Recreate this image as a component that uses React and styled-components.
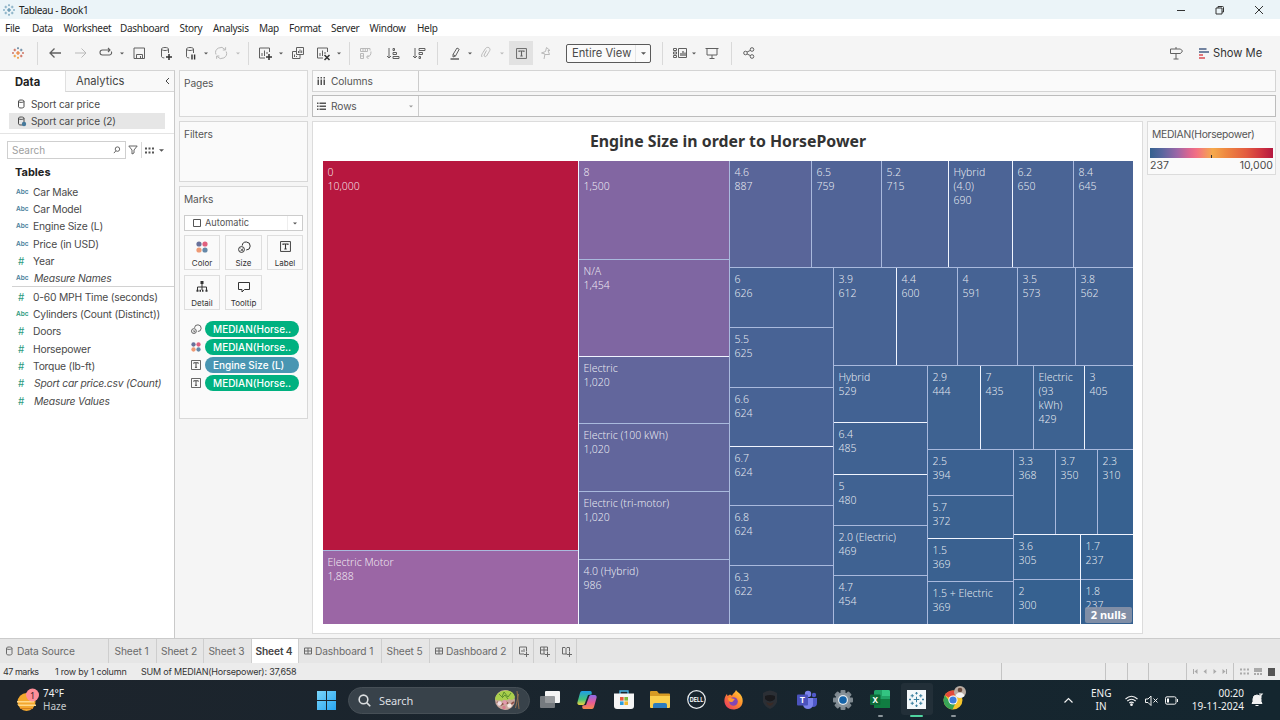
import React from "react";
import styled, { createGlobalStyle } from "styled-components";

const Global = createGlobalStyle`
  * { box-sizing: border-box; }
  html, body { margin: 0; padding: 0; }
  body { width: 1280px; height: 720px; overflow: hidden; background: #f5f5f5; }
  svg { display: block; flex: none; overflow: visible; }
`;

const ui = `"Noto Sans", "Open Sans", sans-serif`;
const book = `Inter, "Noto Sans", sans-serif`;

const Window = styled.div`
  width: 1280px;
  height: 720px;
  display: flex;
  flex-direction: column;
  overflow: hidden;
  font: 11px/14px ${book};
  color: #4a4a4a;
  white-space: nowrap;
`;

/* ---------- title, menu ---------- */
const TitleBar = styled.header`
  height: 19px;
  flex: none;
  display: flex;
  align-items: center;
  padding-left: 3px;
  gap: 4px;
  background: #ebf4f8;
  font: 10px/18px ${ui};
  letter-spacing: -0.35px;
  color: #222;
`;
const WindowButtons = styled.div`
  margin-left: auto;
  display: flex;
  gap: 29px;
  padding-right: 16px;
`;
const MenuBar = styled.nav`
  height: 17px;
  flex: none;
  display: flex;
  background: #fff;
  padding-left: 5px;
  font: 10px/19px ${ui};
  letter-spacing: -0.3px;
  color: #2a2a2a;
`;
const MenuItem = styled.span`
  width: ${(p) => p.$w}px;
  flex: none;
`;

/* ---------- toolbar ---------- */
const Toolbar = styled.div`
  height: 34px;
  flex: none;
  display: flex;
  align-items: center;
  background: #f5f5f5;
`;
const Tool = styled.span`
  margin-left: ${(p) => p.$gap}px;
  width: ${(p) => p.$w || 16}px;
  height: 24px;
  flex: none;
  display: flex;
  align-items: center;
  justify-content: center;
  color: ${(p) => (p.$off ? "#b9b9b9" : "#606060")};
  background: ${(p) => (p.$on ? "#e2e2e2" : "transparent")};
`;
const Rule = styled.i`
  margin-left: ${(p) => p.$gap}px;
  width: 1px;
  height: ${(p) => p.$h || 23}px;
  flex: none;
  background: #d9d9d9;
`;
const FitSelect = styled.div`
  margin-left: 13px;
  width: 85px;
  height: 19px;
  flex: none;
  display: flex;
  align-items: center;
  border: 1px solid #5a5a5a;
  border-radius: 2px;
  background: #fafafa;
  font-size: 11.2px;
  color: #4a4a4a;
  padding-left: 5px;
`;
const FitArrow = styled.span`
  margin-left: auto;
  width: 15px;
  height: 17px;
  display: flex;
  align-items: center;
  justify-content: center;
  border-left: 1px solid #e6e6e6;
`;
const ShowMe = styled.div`
  display: flex;
  align-items: center;
  gap: 4px;
  margin-left: 15px;
  width: 81px;
  font-size: 11.2px;
  color: #333;
`;

/* ---------- workspace ---------- */
const Workspace = styled.main`
  height: 568px;
  flex: none;
  display: flex;
  background: #f5f5f5;
`;
const DataPane = styled.aside`
  width: 175px;
  flex: none;
  background: #fff;
  border-right: 1px solid #c9c9c9;
  border-top: 1px solid #d4d4d4;
`;
const PaneTabs = styled.div`
  display: flex;
  height: 21px;
`;
const PaneTab = styled.div`
  width: ${(p) => p.$w}px;
  padding-left: ${(p) => p.$pad}px;
  padding-right: 4px;
  display: flex;
  align-items: center;
  justify-content: space-between;
  font-size: 11.2px;
  font-weight: ${(p) => (p.$active ? 700 : 400)};
  color: ${(p) => (p.$active ? "#222" : "#444")};
  background: ${(p) => (p.$active ? "#fff" : "#f9f9f9")};
  border-left: ${(p) => (p.$active ? 0 : "1px solid #e0e0e0")};
  border-bottom: ${(p) => (p.$active ? 0 : "1px solid #d6d6d6")};
`;
const Sources = styled.div`
  padding: 4px 9px 4px;
  height: 42px;
  border-bottom: 1px solid #e4e4e4;
`;
const Source = styled.div`
  height: 16.5px;
  display: flex;
  align-items: center;
  padding-left: 8px;
  gap: 5px;
  letter-spacing: -0.15px;
  font-size: 10.1px;
  background: ${(p) => (p.$active ? "#e6e6e6" : "transparent")};
`;
const SearchRow = styled.div`
  display: flex;
  align-items: center;
  height: 18px;
  margin: 7px 0 0 7px;
`;
const SearchBox = styled.div`
  width: 119px;
  height: 18px;
  border: 1px solid #cfcfcf;
  display: flex;
  align-items: center;
  justify-content: space-between;
  padding: 0 4px;
  color: #a0a0a0;
  font-size: 10px;
`;
const SearchIcon = styled.span`
  color: #555;
`;
const FilterTools = styled.div`
  display: flex;
  align-items: center;
  gap: 3px;
  padding-left: 2px;
  color: #666;
`;
const TablesTitle = styled.h2`
  margin: 6px 0 3px 15px;
  font: 700 11px/15px ${book};
  color: #222;
`;
const Fields = styled.div`
  border-top: ${(p) => (p.$rule ? "1px solid #d2d2d2" : 0)};
  margin-left: 12px;
  margin-top: ${(p) => (p.$rule ? -1 : 0)}px;
  padding-top: 1px;
  padding-top: ${(p) => (p.$rule ? 1 : 0)}px;
`;
const Field = styled.div`
  height: 17.33px;
  display: flex;
  align-items: center;
  font-size: 10.3px;
  letter-spacing: -0.2px;
  font-style: ${(p) => (p.$italic ? "italic" : "normal")};
`;
const FieldType = styled.span`
  width: 21px;
  padding-left: ${(p) => (p.$num ? 6 : 4)}px;
  margin-right: ${(p) => (p.$italic ? 1 : 0)}px;
  font-style: normal;
  font-weight: ${(p) => (p.$num ? 400 : 600)};
  font-size: ${(p) => (p.$num ? 10 : 6.5)}px;
  letter-spacing: 0;
  color: ${(p) => (p.$green ? "#2f9b80" : "#4a7f9c")};
`;

const Cards = styled.section`
  width: 129px;
  margin-left: 4px;
  flex: none;
  display: flex;
  flex-direction: column;
  gap: 4px;
`;
const Card = styled.div`
  height: ${(p) => p.$h}px;
  flex: none;
  border: 1px solid #d8d8d8;
  background: #fafafa;
  padding: 5px 4px;
`;
const CardTitle = styled.div`
  font-size: 10.2px;
  line-height: 14px;
  letter-spacing: -0.1px;
  color: #555;
`;
const MarkSelect = styled.div`
  margin-top: 9px;
  height: 16px;
  width: 119px;
  border: 1px solid #ccc;
  background: #fff;
  display: flex;
  align-items: center;
  padding-left: 8px;
  gap: 4px;
  font-size: 9.2px;
  color: #555;
`;
const SelectCaret = styled.span`
  margin-left: auto;
  width: 15px;
  height: 14px;
  display: flex;
  align-items: center;
  justify-content: center;
  border-left: 1px solid #eee;
`;
const MarkGrid = styled.div`
  margin-top: 4px;
  display: grid;
  grid-template-columns: 36px 37px 36px;
  grid-auto-rows: 35px;
  gap: 5px;
`;
const MarkButton = styled.div`
  border: 1px solid #dedede;
  display: flex;
  flex-direction: column;
  align-items: center;
  justify-content: space-between;
  padding: 5px 0 1px;
  font-size: 8px;
  line-height: 10px;
  color: #333;
`;
const Pills = styled.div`
  margin-top: 11px;
  padding-left: 7px;
  display: grid;
  gap: 2px;
`;
const PillRow = styled.div`
  display: flex;
  align-items: center;
  gap: 4px;
  height: 16px;
`;
const Pill = styled.span`
  width: 94px;
  height: 16px;
  border-radius: 8px;
  padding-left: 8px;
  background: ${(p) => (p.$blue ? "#4996b2" : "#00b180")};
  color: #fff;
  font-size: 10px;
  line-height: 16px;
  font-weight: 500;
`;

const Stage = styled.section`
  margin-left: 4px;
  flex: 1;
  display: flex;
  flex-direction: column;
`;
const Shelf = styled.div`
  height: 22px;
  width: 964px;
  margin-bottom: ${(p) => p.$mb}px;
  flex: none;
  display: flex;
  border: 1px solid ${(p) => (p.$dark ? "#bcbcbc" : "#d4d4d4")};
  background: #fafafa;
`;
const ShelfLabel = styled.div`
  width: 106px;
  border-right: 1px solid #ccc;
  display: flex;
  align-items: center;
  gap: 5px;
  padding: 0 5px 0 4px;
  font-size: 10.2px;
  letter-spacing: -0.1px;
  color: #555;
`;
const Push = styled.span`
  margin-left: auto;
`;
const VizRow = styled.div`
  display: flex;
  gap: 4px;
  align-items: flex-start;
`;
const Viz = styled.article`
  width: 831px;
  height: 513px;
  background: #fff;
  border: 1px solid #dcdcdc;
  padding: 0 9px 0 10px;
`;
const VizTitle = styled.h1`
  margin: 0;
  height: 39px;
  text-align: center;
  font: 700 15.85px/39px ${ui};
  color: #333;
`;
const MapFrame = styled.div`
  position: relative;
  display: flex;
  width: 810px;
  height: 463px;
  font: 300 10.5px/14px ${ui};
`;
const Nulls = styled.div`
  position: absolute;
  right: 1px;
  bottom: 1px;
  width: 47px;
  height: 16px;
  border-radius: 2px;
  background: rgba(135, 147, 168, 0.92);
  color: #fff;
  text-align: center;
  font: 700 11px/16px ${ui};
`;
const edge = (p) => (p.$edge ? `1px solid ${p.$edge === "w" ? "#f1f5ff" : "#a9b9dd"}` : 0);
const Split = styled.div`
  display: flex;
  flex-direction: ${(p) => (p.$col ? "column" : "row")};
  flex: ${(p) => (p.$size ? `0 0 ${p.$size}px` : "1 1 0")};
  min-width: 0;
  min-height: 0;
  border-right: ${(p) => (p.$inRow ? edge(p) : 0)};
  border-bottom: ${(p) => (p.$inRow ? 0 : edge(p))};
`;
const Cell = styled(Split)`
  display: block;
  padding: 4px 0 0 4.5px;
  background: ${(p) => p.$bg};
  color: rgba(255, 255, 255, 0.86);
  white-space: pre;
  overflow: hidden;
`;
const Legend = styled.div`
  width: 129px;
  height: 54px;
  background: #fafafa;
  border: 1px solid #dcdcdc;
  padding: 5px 2px 0 2px;
  font-size: 10.5px;
`;
const LegendTitle = styled.div`
  padding-left: 2px;
  color: #555;
  font-size: 10.3px;
  letter-spacing: -0.28px;
`;
const Ramp = styled.div`
  margin-top: 7px;
  width: 123px;
  height: 10px;
  display: flex;
  align-items: flex-end;
  justify-content: center;
  background: linear-gradient(90deg, #35618f 0%, #5a669f 10%, #9b66a7 22%, #dc6690 32%, #f37083 38%, #f49460 46%, #f5a94b 51%, #ee8741 62%, #e35c40 78%, #cf3440 90%, #b4173f 100%);
`;
const Tick = styled.i`
  width: 1px;
  height: 3px;
  background: #333;
`;
const LegendEnds = styled.div`
  display: flex;
  justify-content: space-between;
  width: 123px;
  padding-top: 1px;
`;

/* ---------- sheet tabs and status ---------- */
const SheetTabs = styled.div`
  height: 25px;
  flex: none;
  display: flex;
  background: #e6e6e6;
  border-top: 1px solid #cbcbcb;
`;
const SheetTab = styled.div`
  width: ${(p) => p.$w}px;
  flex: none;
  display: flex;
  align-items: center;
  justify-content: ${(p) => (p.$pad ? "flex-start" : "center")};
  padding-left: ${(p) => p.$pad || 0}px;
  padding-right: ${(p) => (p.$pad ? 0 : p.$w > 30 ? 2 : 0)}px;
  gap: 3px;
  border-right: 1px solid #cecece;
  background: ${(p) => (p.$active ? "#fff" : "transparent")};
  color: ${(p) => (p.$active ? "#444" : "#6a6a6a")};
  font-weight: ${(p) => (p.$active ? 600 : 400)};
  font-size: 10.2px;
  letter-spacing: -0.12px;
`;
const StatusBar = styled.div`
  height: 17px;
  flex: none;
  display: flex;
  background: #ececec;
  color: #333;
  font: 9px/17px ${book};
  letter-spacing: -0.2px;
  padding-left: 3px;
`;
const StatusText = styled.span`
  width: ${(p) => p.$w}px;
  letter-spacing: ${(p) => p.$ls || -0.2}px;
`;
const StatusBox = styled.span`
  width: ${(p) => p.$w}px;
  border-left: 1px solid #c4c4c4;
  display: flex;
  align-items: center;
  justify-content: space-evenly;
`;
const StatusRight = styled.div`
  margin-left: auto;
  display: flex;
`;

/* ---------- taskbar ---------- */
const Taskbar = styled.footer`
  height: 40px;
  flex: none;
  display: flex;
  align-items: center;
  background: linear-gradient(90deg, #1d242c, #19252e 50%, #14262f);
  color: #f2f2f2;
  font: 10px/13px ${ui};
`;
const Weather = styled.div`
  width: 300px;
  padding-left: 16px;
  display: flex;
  align-items: center;
  gap: 4px;
`;
const Stack = styled.div`
  text-align: ${(p) => p.$align || "left"};
  width: ${(p) => p.$w || "auto"};
  line-height: 13.5px;
`;
const Haze = styled.span`
  color: #c6cacd;
`;
const TaskSearch = styled.div`
  margin-left: 12px;
  width: 182px;
  height: 27px;
  border-radius: 14px;
  background: #38424a;
  border: 1px solid #464f56;
  display: flex;
  align-items: center;
  padding: 0 8px 0 9px;
  gap: 8px;
  font-size: 11px;
  letter-spacing: -0.1px;
  color: #dcdfe1;
`;
const Apps = styled.div`
  display: flex;
  margin-left: 2px;
`;
const AppSlot = styled.div`
  width: 36.65px;
  height: 40px;
  display: flex;
  flex-direction: column;
  align-items: center;
  justify-content: space-between;
  padding: 10px 0 3px;
`;
const Running = styled.i`
  width: ${(p) => (p.$on ? 13 : 5)}px;
  height: 2px;
  border-radius: 1px;
  background: ${(p) => (p.$on ? "#4fd5a0" : p.$open ? "#8b949a" : "transparent")};
`;
const AppTile = styled.div`
  width: 32px;
  height: 34px;
  margin-top: -7px;
  padding-top: 7px;
  display: flex;
  justify-content: center;
  border-radius: 3px;
  background: ${(p) => (p.$on ? "#222f38" : "transparent")};
`;
const Tray = styled.div`
  margin-left: auto;
  display: flex;
  align-items: center;
  padding-right: 17px;
`;
const TrayItem = styled.span`
  margin-left: ${(p) => p.$l || 0}px;
  margin-right: ${(p) => p.$r || 0}px;
  display: flex;
`;

/* ---------- icons ---------- */
const Svg = ({ s = 16, w, h, vb, children, sw = 1 }) => (
  <svg width={w || s} height={h || s} viewBox={vb || `0 0 ${w || s} ${h || s}`} fill="none" stroke="currentColor" strokeWidth={sw}>
    {children}
  </svg>
);
const Caret = ({ s = 5, c = "#555" }) => (
  <svg width={s} height={3} viewBox="0 0 6 3"><path d="M0 0h6L3 3z" fill={c} /></svg>
);
const plus = (x, y, r) => `M${x - r} ${y}h${2 * r}M${x} ${y - r}v${2 * r}`;
const TableauMark = ({ s = 12, colors = ["#e8762c", "#c8604c", "#5b7f9a", "#eb9129"] }) => (
  <Svg s={s} vb="0 0 12 12" sw={0.9}>
    <path d={plus(6, 6, 2)} stroke={colors[0]} strokeWidth="1.1" />
    <path d={plus(2.8, 3, 1.3) + plus(9.2, 9, 1.3)} stroke={colors[1]} />
    <path d={plus(9.2, 3, 1.3) + plus(6, 1.2, 1)} stroke={colors[2]} />
    <path d={plus(2.8, 9, 1.3) + plus(6, 10.8, 1)} stroke={colors[3]} />
    <path d={plus(1, 6, 0.9) + plus(11, 6, 0.9)} stroke={colors[1]} />
  </Svg>
);
const Back = () => <Svg><path d="M14 8H3M7.5 3.500L3 8l4.500 4.500" strokeWidth="1.300" /></Svg>;
const Forward = () => <Svg><path d="M2 8h11M8.500 3.500L13 8l-4.500 4.500" /></Svg>;
const Replay = () => <Svg><path d="M12 5H4.500a2.500 2.500 0 0 0 0 5H11.500a2.300 2.300 0 0 0 1.800-3.500M10 3l2 2-2 2" strokeWidth="1.100" /></Svg>;
const Save = () => <Svg><path d="M3 3h10.500v10.500H3zM5.500 13.500v-4h6v4M9.500 11v2.500" /></Svg>;
const Cyl = ({ children }) => (
  <Svg>
    <path d="M11.500 8V4c0-.9-1.500-1.500-3.500-1.500S4.500 3.100 4.500 4v7.500c0 .8 1.200 1.300 2.800 1.400M4.500 4c0 .9 1.500 1.500 3.500 1.500S11.500 4.900 11.500 4" />
    {children}
  </Svg>
);
const AddData = () => <Cyl><path d="M12 9v6M9 12h6" strokeWidth="1.500" stroke="#333" /></Cyl>;
const PauseData = () => <Cyl><path d="M10 9.500v5M12.600 9.500v5" strokeWidth="1.400" stroke="#333" /></Cyl>;
const Refresh = () => <Svg><path d="M3 9.500a5.200 5.200 0 0 1 9-5M13.200 6.500a5.200 5.200 0 0 1-9 5M9.800 5h2.800V2.200M6.400 11H3.600v2.800" /></Svg>;
const ChartBox = ({ children }) => <Svg><path d="M12.500 7V3h-10v10H8M5 11V8M7.500 11V5.500M10 9V7" />{children}</Svg>;
const NewSheet = () => <ChartBox><path d="M12 9v6M9 12h6" strokeWidth="1.500" stroke="#333" /></ChartBox>;
const ClearSheet = () => <ChartBox><path d="M9.500 10l5 5M14.500 10l-5 5" strokeWidth="1.500" stroke="#333" /></ChartBox>;
const Duplicate = () => <Svg><path d="M6.500 2.500h7v7h-7zM6.500 6.500h-4v7h7.500v-4M8.500 8V6M10 8V4.500M11.700 8V5.500M4.500 12V9.500M6.500 12v-1" /></Svg>;
const Swap = () => <Svg><path d="M2.500 3.500h9.500v2M2.500 3.500v3h7v-3M5 3.500v3M7.300 3.500v3M2.500 8.500v5h3v-5zM2.500 11h3M13 6.500c0 3.500-1 5-4 5.500M10.500 10l-2 2 2 2" /></Svg>;
const SortAsc = () => <Svg><path d="M4 3v10M2 11l2 2 2-2M8 3.500h1.500v2H8zM8 7.500h3.500v2H8zM8 11.500h6v2H8z" /></Svg>;
const SortDesc = () => <Svg><path d="M4 3v10M2 11l2 2 2-2M8 3.500h6v2H8zM8 7.500h3.500v2H8zM8 11.500h1.500v2H8z" /></Svg>;
const Pen = () => <Svg><path d="M6 9.500L10 3l2.200 1.300L8.500 11 6 12zM6 9.500L8.500 11" /><path d="M3.500 14h8.500" strokeWidth="1.500" /></Svg>;
const Clip = () => <Svg><path d="M4 12c-1-1.500 0-3 1-4.500l2.500-4C8.500 2 11 2 11.800 3.500c.6 1.300-.3 2.500-1 3.700L8.500 11c-.8 1.200-2.800.6-2.400-1L8.500 5.500" /></Svg>;
const TBox = ({ s = 12 }) => (
  <Svg s={s} vb="0 0 12 12"><path d="M.6.6h10.800v10.800H.6z" /><path d="M3.300 4.400V3.300h5.400v1.100M6 3.300v5.400M4.700 8.800h2.600" strokeWidth="1.200" /></Svg>
);
const Pin = () => <Svg><path d="M9.500 2.500L8.500 6.500 4.500 8l3.500 1L7 14M9.500 2.500l3.500 3h-2l1.500 4H8" /></Svg>;
const ShowCards = () => <Svg><path d="M1.500 3.500h3v2h-3zM1.500 7h3v2h-3zM1.500 10.500h3v2h-3zM6.500 3.500h8v9h-8z" /><path d="M9 11V8M11 11V6M13 11V7.500" strokeWidth="1.300" /></Svg>;
const Present = () => <Svg><path d="M3 3.500h10v6.500H3zM1.500 3.500h13M8 10v4M5.500 13.500h5" /></Svg>;
const Share = () => <Svg><circle cx="4.500" cy="8" r="1.800" /><circle cx="11" cy="4.500" r="1.800" /><circle cx="11" cy="11.500" r="1.800" /><path d="M6.100 7l3.300-1.600M6.100 9l3.300 1.600" /></Svg>;
const Sign = () => <Svg><path d="M2.500 4h10l2 2-2 2.500h-10zM8 2v2M8 8.500V14M5.500 14h5" /></Svg>;
const ShowMeIcon = () => (
  <svg width="10" height="11" viewBox="0 0 10 11">
    <path d="M0 0h7.500v2H0zM0 3h10v2H0z" fill="#7283a0" /><path d="M0 6h4v2H0zM0 9h6v2H0z" fill="#e2777b" />
  </svg>
);
const Db = ({ linked }) => (
  <Svg w={9} h={10}><path d="M1.500 2.200v5.600c0 .7 1 1.200 2.700 1.200S7 8.500 7 7.800V2.200C7 1.500 6 1 4.200 1S1.500 1.500 1.500 2.200zm0 0c0 .7 1 1.200 2.700 1.200S7 2.900 7 2.200" />{linked && <circle cx="7" cy="8" r="2.200" fill="#45799b" stroke="none" />}</Svg>
);
const Lens = ({ flip, s = 9, sw = 1 }) => (
  <Svg s={s} vb="0 0 9 9" sw={sw}>{flip ? <><circle cx="5" cy="3.500" r="2.500" /><path d="M3.200 5.500L1 8" /></> : <><circle cx="3.800" cy="3.800" r="3" /><path d="M6 6l2.500 2.500" /></>}</Svg>
);
const Funnel = () => <Svg w={10} h={10}><path d="M.8 1h8.400L6 5v3L4 9V5z" /></Svg>;
const Dots6 = ({ c = "#555" }) => (
  <svg width="9" height="7" viewBox="0 0 9 7"><path d="M0 .5h2v2H0zM3.500.5h2v2h-2zM7 .5h2v2H7zM0 4.500h2v2H0zM3.500 4.500h2v2h-2zM7 4.500h2v2H7z" fill={c} /></svg>
);
const ColorDots = ({ s = 12 }) => (
  <svg width={s} height={s} viewBox="0 0 12 12">
    <circle cx="3" cy="3" r="2.600" fill="#68719a" /><circle cx="9" cy="3" r="2.600" fill="#e0607e" /><circle cx="3" cy="9" r="2.600" fill="#ee9a75" /><circle cx="9" cy="9" r="2.600" fill="#6588a8" />
  </svg>
);
const SizeIcon = ({ s = 12 }) => (
  <Svg s={s} vb="0 0 12 12"><path d="M4.200 4.600a4 4 0 1 1 4 4.400" /><circle cx="3.500" cy="8.500" r="2.900" /><path d="M2.600 7.600L4.500 9.400M4.500 7.600v1.800H2.600" strokeWidth=".7" /></Svg>
);
const DetailIcon = () => (
  <Svg s={12}><path d="M6 2v4M1.500 9V6h9v3M6 6v3" /><path d="M4.500 0h3v3h-3zM.5 8.800h2v2h-2zM3.500 8.800h1.500v2H3.500zM6 8.800h1.500v2H6zM9.500 8.800h2v2h-2z" fill="currentColor" stroke="none" /></Svg>
);
const TipIcon = () => <Svg s={12}><path d="M.5 1.500h11v7H6.500L4 11V8.500H.5z" /></Svg>;
const ColIcon = () => <svg width="9" height="8"><path d="M.5 0h1.500v1.500H.5zM3.500 0H5v1.500H3.500zM6.500 0H8v1.500H6.500zM.5 2.500h1.500V8H.5zM3.500 2.500H5V8H3.500zM6.500 2.500H8V8H6.500z" fill="#555" /></svg>;
const RowIcon = () => <svg width="9" height="8"><path d="M0 .5h1.500V2H0zM0 3.500h1.500V5H0zM0 6.500h1.500V8H0zM2.500.5H9V2H2.500zM2.500 3.500H9V5H2.500zM2.500 6.500H9V8H2.500z" fill="#555" /></svg>;
const GridIcon = () => <Svg w={8} h={8}><path d="M.5 1h7v6h-7zM4 1v6M.5 4h7" /></Svg>;
const NewTabIcon = ({ kind }) => (
  <Svg w={11} h={11}>
    <path d={kind === "story" ? "M8.500 5.500V1.500H6L5 2.500 4 1.500H1.500V8H6M5 2.500V8" : "M8.500 5.500v-4.500h-7v7H6"} />
    {kind === "sheet" && <path d="M4 6V4M6 6V2.800" />}
    {kind === "dash" && <path d="M1.500 4h7M5 1v7" />}
    <path d="M8.500 6v5M6 8.500h5" />
  </Svg>
);

/* ---------- data ---------- */
const menus = [["File", 27], ["Data", 31.5], ["Worksheet", 56.500], ["Dashboard", 59.500], ["Story", 33.500], ["Analysis", 46], ["Map", 30], ["Format", 42], ["Server", 38.500], ["Window", 47.500], ["Help", 30]];
const dims = [["Abc", "Car Make"], ["Abc", "Car Model"], ["Abc", "Engine Size (L)"], ["Abc", "Price (in USD)"], ["#", "Year"], ["Abc", "Measure Names", true]];
const measures = [["#", "0-60 MPH Time (seconds)"], ["Abc", "Cylinders (Count (Distinct))"], ["#", "Doors"], ["#", "Horsepower"], ["#", "Torque (lb-ft)"], ["#", "Sport car price.csv (Count)", true], ["#", "Measure Values", true]];

const cell = (text, bg, size, e) => ({ text, bg, size, edge: e });
const split = (dir, size, e, kids) => ({ dir, size, edge: e, kids });
const tree = split("row", 810, null, [
  split("col", 256, "w", [cell("0\n10,000", "#b7173f", 390, "l"), cell("Electric Motor\n1,888", "#9b66a5")]),
  split("col", 151, "l", [
    cell("8\n1,500", "#8266a2", 99, "l"), cell("N/A\n1,454", "#7f66a2", 97, "w"), cell("Electric\n1,020", "#62669c", 67, "l"),
    cell("Electric (100 kWh)\n1,020", "#62669c", 68, "l"), cell("Electric (tri-motor)\n1,020", "#62669c", 68, "l"), cell("4.0 (Hybrid)\n986", "#60659b"),
  ]),
  split("col", 0, null, [
    split("row", 107, "l", [
      cell("4.6\n887", "#596599", 82, "l"), cell("6.5\n759", "#516497", 70, "l"), cell("5.2\n715", "#4e6496", 67, "w"),
      cell("Hybrid\n(4.0)\n690", "#4c6496", 64, "w"), cell("6.2\n650", "#4a6495", 61, "l"), cell("8.4\n645", "#4a6495"),
    ]),
    split("row", 0, null, [
      split("col", 104, "l", [
        cell("6\n626", "#486395", 60, "l"), cell("5.5\n625", "#486395", 60, "l"), cell("6.6\n624", "#486395", 59, "w"),
        cell("6.7\n624", "#486395", 59, "l"), cell("6.8\n624", "#486395", 60, "l"), cell("6.3\n622", "#486395"),
      ]),
      split("col", 0, null, [
        split("row", 98, "l", [
          cell("3.9\n612", "#476394", 63, "w"), cell("4.4\n600", "#476394", 61, "l"), cell("4\n591", "#466394", 60, "l"),
          cell("3.5\n573", "#456393", 58, "l"), cell("3.8\n562", "#446393"),
        ]),
        split("row", 0, null, [
          split("col", 94, "l", [
            cell("Hybrid\n529", "#426293", 57, "w"), cell("6.4\n485", "#406292", 52, "w"), cell("5\n480", "#406292", 51, "l"),
            cell("2.0 (Electric)\n469", "#3f6292", 50, "l"), cell("4.7\n454", "#3f6292"),
          ]),
          split("col", 0, null, [
            split("row", 84, "l", [
              cell("2.9\n444", "#3e6291", 53, "w"), cell("7\n435", "#3e6291", 53, "l"), cell("Electric\n(93\nkWh)\n429", "#3d6291", 51, "w"), cell("3\n405", "#3c6191"),
            ]),
            split("row", 0, null, [
              split("col", 86, "l", [
                cell("2.5\n394", "#3b6191", 46, "l"), cell("5.7\n372", "#3a6190", 43, "w"), cell("1.5\n369", "#3a6190", 43, "l"), cell("1.5 + Electric\n369", "#3a6190"),
              ]),
              split("col", 0, null, [
                split("row", 85, "w", [cell("3.3\n368", "#3a6190", 42, "l"), cell("3.7\n350", "#396190", 42, "l"), cell("2.3\n310", "#376190")]),
                split("row", 0, null, [
                  split("col", 67, "w", [cell("3.6\n305", "#376190", 45, "l"), cell("2\n300", "#366190")]),
                  split("col", 0, null, [cell("1.7\n237", "#346090", 45, "l"), cell("1.8\n237", "#346090")]),
                ]),
              ]),
            ]),
          ]),
        ]),
      ]),
    ]),
  ]),
]);
const Node = ({ n, inRow }) =>
  n.kids ? (
    <Split $col={n.dir === "col"} $size={n.size} $edge={n.edge} $inRow={inRow}>
      {n.kids.map((k, i) => <Node key={i} n={k} inRow={n.dir === "row"} />)}
    </Split>
  ) : (
    <Cell $size={n.size} $edge={n.edge} $inRow={inRow} $bg={n.bg}>{n.text}</Cell>
  );

/* ---------- taskbar art ---------- */
const WinLogo = () => <svg width="19" height="19" viewBox="0 0 19 19"><defs><linearGradient id="win" x2="1" y2="1"><stop stopColor="#7ad6fb" /><stop offset="1" stopColor="#27a4f0" /></linearGradient></defs><path d="M0 0h9v9H0zM10 0h9v9h-9zM0 10h9v9H0zM10 10h9v9h-9z" fill="url(#win)" /></svg>;
const WeatherIcon = () => (
  <svg width="23" height="24" viewBox="0 0 23 24">
    <circle cx="10.500" cy="14" r="9" fill="#f3a72e" /><path d="M1 13h17v1.500H1zM1 16.500h19V18H3z" fill="#ffd98a" /><path d="M4 20h13v1H5z" fill="#d68120" />
    <circle cx="16.500" cy="7" r="6.500" fill="#ff8e98" /><text x="16.500" y="10.500" fontSize="9" textAnchor="middle" fill="#40242a" fontFamily="Noto Sans">1</text>
  </svg>
);
const Terrarium = () => (
  <svg width="27" height="22" viewBox="0 0 27 22">
    <circle cx="11" cy="11" r="10" fill="#c9a79c" />
    <path d="M1 10C2 0 19-2 21 8c-2 4-4 3-6 2-3 3-5-1-7 2-3-2-5 1-7-2z" fill="#a9cf4c" /><path d="M5 5l3 3 2-5 4 5 3-4M8 9l3-3 3 4" stroke="#5d8f2f" fill="none" />
    <path d="M3 13l4 3 5-3 4 3 4-3" stroke="#8d5148" strokeWidth="1.600" fill="none" /><circle cx="5.500" cy="14.500" r="2.200" fill="#f2dfe6" /><circle cx="11" cy="13.500" r="2" fill="#e49aad" /><circle cx="15.500" cy="16.500" r="2.200" fill="#f5e9e4" /><circle cx="10" cy="18.500" r="1.700" fill="#dc7c90" />
    <path d="M23 2l2 18M24.500 5l-3 14" stroke="#92704f" fill="none" />
  </svg>
);
const TaskView = () => <svg width="20" height="19" viewBox="0 0 20 19"><rect x="5" y="1" width="15" height="12" rx="1" fill="#f4f4f4" /><rect x="0" y="6" width="15" height="12" rx="1" fill="#868a8d" fillOpacity=".85" /></svg>;
const Copilot = () => (
  <svg width="20" height="20" viewBox="0 0 20 20"><defs><linearGradient id="cpA" x2="0" y2="1"><stop stopColor="#1f9de8" /><stop offset=".6" stopColor="#41c27c" /><stop offset="1" stopColor="#f3d23c" /></linearGradient><linearGradient id="cpB" x2="0" y2="1"><stop stopColor="#8a6bea" /><stop offset=".55" stopColor="#e95b92" /><stop offset="1" stopColor="#f58a4a" /></linearGradient></defs>
    <path d="M5 1h8c2 0 2 2 1.500 3.500L11 5 8 13c-.5 1.500-1 2-3 2H2.500C.5 15 0 13.500.5 12L3 3c.4-1.300 1-2 2-2z" fill="url(#cpA)" /><path d="M15 19H7c-2 0-2-2-1.500-3.500L9 15l3-8c.5-1.500 1-2 3-2h2.500c2 0 2.500 1.500 2 3L17 17c-.4 1.300-1 2-2 2z" fill="url(#cpB)" /></svg>
);
const Store = () => <svg width="20" height="19" viewBox="0 0 20 19"><path d="M6 4V1h8v3" stroke="#49b5e8" fill="none" strokeWidth="1.300" /><path d="M0 3.500h20V16q0 3-3 3H3q-3 0-3-3z" fill="#f5f5f5" /><path d="M6 7h3.600v3.600H6z" fill="#e7573a" /><path d="M10.400 7H14v3.600h-3.600z" fill="#7db83b" /><path d="M6 11.400h3.600V15H6z" fill="#2d9fe0" /><path d="M10.400 11.400H14V15h-3.600z" fill="#f4b82e" /></svg>;
const Folder = () => <svg width="20" height="19" viewBox="0 0 20 19"><path d="M0 2q0-1 1-1h6l2 2.500h10q1 0 1 1V9H0z" fill="#d79b24" /><path d="M0 6h20v11q0 1-1 1H1q-1 0-1-1z" fill="#fbcf4d" /><path d="M3 18v-3q0-2 2-2h10q2 0 2 2v3z" fill="#2c7cbe" /></svg>;
const Dell = () => <svg width="19" height="19" viewBox="0 0 19 19"><circle cx="9.500" cy="9.500" r="8.800" fill="none" stroke="#e8ecee" strokeWidth="1.200" /><text x="9.500" y="11.600" textAnchor="middle" fontSize="5.500" fontWeight="700" fontFamily="Inter" fill="#fff">DELL</text></svg>;
const Firefox = () => <svg width="20" height="20" viewBox="0 0 20 20"><defs><linearGradient id="ff" x1="1" x2="0" y2="1"><stop stopColor="#ffdc3e" /><stop offset=".45" stopColor="#ff8a2c" /><stop offset="1" stopColor="#e52e68" /></linearGradient></defs><path d="M12 0c1 2 3 2.500 4.500 4.500 4 5 3 14-6 15C4 20-.5 15 .5 9 1 6.500 2 5 3 4l.5 2L6 4.500l2 1.200C9 3 11 3 12 0z" fill="url(#ff)" /><circle cx="9.500" cy="11.500" r="4.300" fill="#8346b4" /><path d="M4 8c3-1 4 1 7 1-2 1-1 3-4 3-2 0-3-2-3-4z" fill="#ff9a2f" /></svg>;
const Dark = () => <svg width="16" height="20" viewBox="0 0 16 20"><path d="M1 3q7-5 14 0v9q-2 5-7 7-5-2-7-7z" fill="#2b2f35" /><path d="M3 6q5-2 10 0v3q-2 2-5 2.500-3-.5-5-2.500z" fill="#1a1a1d" /><path d="M4 12q4 2 8 0-1 3-4 4-3-1-4-4z" fill="#382a26" /></svg>;
const Teams = () => <svg width="20" height="20" viewBox="0 0 20 20"><circle cx="11" cy="4" r="3.200" fill="#7b83eb" /><circle cx="17" cy="5" r="2.200" fill="#5059c9" /><path d="M13 8h7v5q0 4-4 4-3 0-3-3z" fill="#5059c9" /><path d="M6 8h10v7q-1 4-5 4t-5-4z" fill="#7b83eb" /><rect y="4.500" width="11" height="11" rx="1" fill="#4b53bc" /><text x="5.500" y="13" textAnchor="middle" fontSize="8" fontWeight="700" fill="#fff" fontFamily="Inter">T</text></svg>;
const Gear = () => (
  <svg width="20" height="20" viewBox="0 0 20 20">{[0, 45, 90, 135].map((a) => <rect key={a} x="7.500" y="0" width="5" height="20" rx="1" fill="#7f8990" transform={`rotate(${a} 10 10)`} />)}<circle cx="10" cy="10" r="7.500" fill="#87929a" /><circle cx="10" cy="10" r="5" fill="#e5eaee" /><circle cx="10" cy="10" r="3.800" fill="#1463a8" /></svg>
);
const Excel = () => <svg width="20" height="19" viewBox="0 0 20 19"><rect x="4" width="16" height="18" rx="1.500" fill="#21a366" /><path d="M12 0h6.500Q20 0 20 1.500V6h-8z" fill="#33c481" /><path d="M4 9h16v7.500q0 1.500-1.500 1.500h-13Q4 18 4 16.500z" fill="#107c41" /><rect y="4.500" width="10.500" height="10.500" rx="1" fill="#0e6b38" /><text x="5.200" y="12.800" textAnchor="middle" fontSize="8" fontWeight="700" fill="#fff" fontFamily="Inter">X</text></svg>;
const TableauApp = () => (
  <svg width="19" height="19" viewBox="0 0 19 19"><rect width="19" height="19" fill="#f3f8fa" /><g transform="translate(2 2) scale(1.25)"><path d={plus(6, 6, 2.2) + plus(2.6, 3, 1.3) + plus(9.4, 9, 1.3) + plus(9.4, 3, 1.3) + plus(2.6, 9, 1.3) + plus(6, 1, 1) + plus(6, 11, 1) + plus(0.8, 6, 0.8) + plus(11.2, 6, 0.8)} stroke="#397f9e" strokeWidth=".8" /></g></svg>
);
const Chrome = () => (
  <svg width="23" height="20" viewBox="0 4 23 20"><circle cx="11" cy="14" r="9.500" fill="#f5c52c" /><path d="M11 14L2.800 9.200A9.500 9.500 0 0 1 19.300 9.500H11z" fill="#e34a3c" /><path d="M2.800 9.200A9.500 9.500 0 0 0 10.500 23.500L14 16l-5 1z" fill="#38a457" /><circle cx="11" cy="14" r="4.600" fill="#fff" /><circle cx="11" cy="14" r="3.600" fill="#3f7ddc" /><circle cx="18" cy="6" r="6" fill="#b9aca2" /><circle cx="18" cy="4" r="2.300" fill="#6b4a3c" /><path d="M13.500 10q1-3.500 4.500-3.500t4.500 3.500q-4.500 4-9 0z" fill="#f4f4f4" /></svg>
);
const apps = [[TaskView], [Copilot], [Store], [Folder], [Dell], [Firefox], [Dark], [Teams], [Gear], [Excel, "open"], [TableauApp, "on"], [Chrome, "open"]];

const FieldRow = ({ f, green }) => (
  <Field $italic={f[2]}>
    <FieldType $num={f[0] === "#"} $green={green || f[0] === "#"} $italic={f[2]}>{f[0]}</FieldType>
    {f[1]}
  </Field>
);

export default function App() {
  return (
    <Window>
      <Global />
      <TitleBar>
        <TableauMark s={12} colors={["#4c87a5", "#7aa7be", "#7aa7be", "#7aa7be"]} />
        Tableau - Book1
        <WindowButtons>
          <Svg s={10}><path d="M1 5.500h8" stroke="#333" /></Svg>
          <Svg s={10}><path d="M1 3h6v6H1zM3 3V1.500h4.500q1 0 1 1V7H7" stroke="#333" strokeLinejoin="round" /></Svg>
          <Svg s={10}><path d="M1 1l8 8M9 1L1 9" stroke="#333" /></Svg>
        </WindowButtons>
      </TitleBar>
      <MenuBar>{menus.map(([m, w]) => <MenuItem key={m} $w={w}>{m}</MenuItem>)}</MenuBar>
      <Toolbar>
        <Tool $gap={10}><TableauMark /></Tool>
        <Rule $gap={11} />
        <Tool $gap={9}><Back /></Tool>
        <Tool $gap={10} $off><Forward /></Tool>
        <Tool $gap={9}><Replay /></Tool>
        <Tool $gap={5} $w={6}><Caret s={4} /></Tool>
        <Tool $gap={6}><Save /></Tool>
        <Tool $gap={10}><AddData /></Tool>
        <Tool $gap={9}><PauseData /></Tool>
        <Tool $gap={5} $w={6}><Caret s={4} /></Tool>
        <Tool $gap={4} $off><Refresh /></Tool>
        <Tool $gap={6} $w={6}><Caret s={4} c="#bbb" /></Tool>
        <Rule $gap={7} />
        <Tool $gap={8}><NewSheet /></Tool>
        <Tool $gap={5} $w={6}><Caret s={4} /></Tool>
        <Tool $gap={6}><Duplicate /></Tool>
        <Tool $gap={9}><ClearSheet /></Tool>
        <Tool $gap={5} $w={6}><Caret s={4} /></Tool>
        <Rule $gap={7} />
        <Tool $gap={8} $off><Swap /></Tool>
        <Tool $gap={11}><SortAsc /></Tool>
        <Tool $gap={10}><SortDesc /></Tool>
        <Rule $gap={10} />
        <Tool $gap={9}><Pen /></Tool>
        <Tool $gap={4} $w={6}><Caret s={4} /></Tool>
        <Tool $gap={5} $off><Clip /></Tool>
        <Tool $gap={5} $w={6}><Caret s={4} c="#bbb" /></Tool>
        <Tool $gap={4} $w={24} $on><TBox s={11} /></Tool>
        <Tool $gap={4} $off><Pin /></Tool>
        <FitSelect>Entire View<FitArrow><Caret /></FitArrow></FitSelect>
        <Rule $gap={11} />
        <Tool $gap={9}><ShowCards /></Tool>
        <Tool $gap={3} $w={6}><Caret s={4} /></Tool>
        <Tool $gap={7}><Present /></Tool>
        <Rule $gap={11} />
        <Tool $gap={9}><Share /></Tool>
        <Push><Tool $gap={0}><Sign /></Tool></Push>
        <ShowMe><ShowMeIcon />Show Me</ShowMe>
      </Toolbar>

      <Workspace>
        <DataPane>
          <PaneTabs>
            <PaneTab $w={65} $pad={15} $active>Data</PaneTab>
            <PaneTab $w={109} $pad={10}>Analytics<Svg w={5} h={8}><path d="M4 1L1 4l3 3" /></Svg></PaneTab>
          </PaneTabs>
          <Sources>
            <Source><Db />Sport car price</Source>
            <Source $active><Db linked />Sport car price (2)</Source>
          </Sources>
          <SearchRow>
            <SearchBox>Search<SearchIcon><Lens flip s={8} /></SearchIcon></SearchBox>
            <FilterTools><Funnel /><Rule $gap={0} $h={16} /><Dots6 /><Tool $gap={1} $w={7}><Caret /></Tool></FilterTools>
          </SearchRow>
          <TablesTitle>Tables</TablesTitle>
          <Fields>{dims.map((f) => <FieldRow key={f[1]} f={f} />)}</Fields>
          <Fields $rule>{measures.map((f) => <FieldRow key={f[1]} f={f} green />)}</Fields>
        </DataPane>

        <Cards>
          <Card $h={47}><CardTitle>Pages</CardTitle></Card>
          <Card $h={61}><CardTitle>Filters</CardTitle></Card>
          <Card $h={233}>
            <CardTitle>Marks</CardTitle>
            <MarkSelect><Svg s={8}><path d="M.5.5h7v7h-7z" /></Svg>Automatic<SelectCaret><Caret s={4} /></SelectCaret></MarkSelect>
            <MarkGrid>
              <MarkButton><ColorDots />Color</MarkButton>
              <MarkButton><SizeIcon />Size</MarkButton>
              <MarkButton><TBox s={11} />Label</MarkButton>
              <MarkButton><DetailIcon />Detail</MarkButton>
              <MarkButton><TipIcon />Tooltip</MarkButton>
            </MarkGrid>
            <Pills>
              <PillRow><SizeIcon s={10} /><Pill>MEDIAN(Horse..</Pill></PillRow>
              <PillRow><ColorDots s={10} /><Pill>MEDIAN(Horse..</Pill></PillRow>
              <PillRow><TBox s={10} /><Pill $blue>Engine Size (L)</Pill></PillRow>
              <PillRow><TBox s={10} /><Pill>MEDIAN(Horse..</Pill></PillRow>
            </Pills>
          </Card>
        </Cards>

        <Stage>
          <Shelf $mb={3}><ShelfLabel><ColIcon />Columns</ShelfLabel></Shelf>
          <Shelf $mb={4} $dark><ShelfLabel><RowIcon />Rows<Push><Caret s={4} c="#999" /></Push></ShelfLabel></Shelf>
          <VizRow>
            <Viz>
              <VizTitle>Engine Size in order to HorsePower</VizTitle>
              <MapFrame><Node n={tree} inRow /><Nulls>2 nulls</Nulls></MapFrame>
            </Viz>
            <Legend>
              <LegendTitle>MEDIAN(Horsepower)</LegendTitle>
              <Ramp><Tick /></Ramp>
              <LegendEnds><span>237</span><span>10,000</span></LegendEnds>
            </Legend>
          </VizRow>
        </Stage>
      </Workspace>

      <SheetTabs>
        <SheetTab $w={109} $pad={5}><Db />Data Source</SheetTab>
        <SheetTab $w={48}>Sheet 1</SheetTab>
        <SheetTab $w={47}>Sheet 2</SheetTab>
        <SheetTab $w={48}>Sheet 3</SheetTab>
        <SheetTab $w={47} $active>Sheet 4</SheetTab>
        <SheetTab $w={83} $pad={5}><GridIcon />Dashboard 1</SheetTab>
        <SheetTab $w={48}>Sheet 5</SheetTab>
        <SheetTab $w={83} $pad={5}><GridIcon />Dashboard 2</SheetTab>
        <SheetTab $w={21}><NewTabIcon kind="sheet" /></SheetTab>
        <SheetTab $w={22}><NewTabIcon kind="dash" /></SheetTab>
        <SheetTab $w={21}><NewTabIcon kind="story" /></SheetTab>
      </SheetTabs>
      <StatusBar>
        <StatusText $w={52} $ls={-0.5}>47 marks</StatusText>
        <StatusText $w={86}>1 row by 1 column</StatusText>
        <StatusText $w={180}>SUM of MEDIAN(Horsepower): 37,658</StatusText>
        <StatusRight>
          <StatusBox $w={104} /><StatusBox $w={22} /><StatusBox $w={21} /><StatusBox $w={38} />
          <StatusBox $w={47}>
            <svg width="5" height="5"><path d="M0 0h1v5H0zM4.500 0v5L1.500 2.500z" fill="#aaa" /></svg>
            <svg width="4" height="5"><path d="M3.500 0v5L.5 2.500z" fill="#aaa" /></svg>
            <svg width="4" height="5"><path d="M.5 0v5l3-2.500z" fill="#aaa" /></svg>
            <svg width="5" height="5"><path d="M4 0h1v5H4zM.5 0v5l3-2.500z" fill="#aaa" /></svg>
          </StatusBox>
          <StatusBox $w={47}>
            <Dots6 c="#aaa" />
            <svg width="8" height="8"><path d="M0 0h8v4H0zM0 5h2v2H0zM3 5h2v2H3zM6 5h2v2H6z" fill="#aaa" /></svg>
            <svg width="7" height="8"><path d="M0 0h7v8H0z" fill="#555" /></svg>
          </StatusBox>
        </StatusRight>
      </StatusBar>

      <Taskbar>
        <Weather><WeatherIcon /><Stack>74°F<br /><Haze>Haze</Haze></Stack></Weather>
        <TrayItem $l={17}><WinLogo /></TrayItem>
        <TaskSearch><Lens s={13} sw={1.1} />Search<Push><Terrarium /></Push></TaskSearch>
        <Apps>
          {apps.map(([Icon, state], i) => (
            <AppSlot key={i}>
              <AppTile $on={state === "on"}><Icon /></AppTile>
              <Running $on={state === "on"} $open={state === "open"} />
            </AppSlot>
          ))}
        </Apps>
        <Tray>
          <TrayItem $r={18}><Svg w={9} h={6} sw={1.2}><path d="M.5 5.500l4-4 4 4" /></Svg></TrayItem>
          <Stack $align="center" $w="20px">ENG<br />IN</Stack>
          <TrayItem $l={14} $r={7}><Svg w={13} h={11} sw={1.1}><path d="M.5 4q6-5.500 12 0M2.300 6q4.200-3.600 8.400 0M4.300 8q2.200-1.800 4.400 0" /><circle cx="6.500" cy="9.700" r=".8" fill="#fff" /></Svg></TrayItem>
          <TrayItem $r={7}><Svg w={13} h={11}><path d="M.5 4H3l3-3v9.500l-3-3H.5zM8.500 3.500l4 4M12.500 3.500l-4 4" /></Svg></TrayItem>
          <TrayItem $r={13}><Svg w={13} h={9}><rect x=".5" y=".8" width="10.500" height="7.400" rx="1.500" /><path d="M12.500 3v3" /><path d="M2 2.500h2v4H2z" fill="#fff" stroke="none" /></Svg></TrayItem>
          <Stack $align="right" $w="53px">00:20<br />19-11-2024</Stack>
          <TrayItem $l={7}><Svg w={12} h={14}><path d="M1 10.500l1-2V6q0-4 4-4t4 4v2.500l1 2z" fill="#f2f2f2" /><path d="M4.500 12.500h3M8 1h3L8.500 4H11" strokeWidth="1.200" /></Svg></TrayItem>
        </Tray>
      </Taskbar>
    </Window>
  );
}
